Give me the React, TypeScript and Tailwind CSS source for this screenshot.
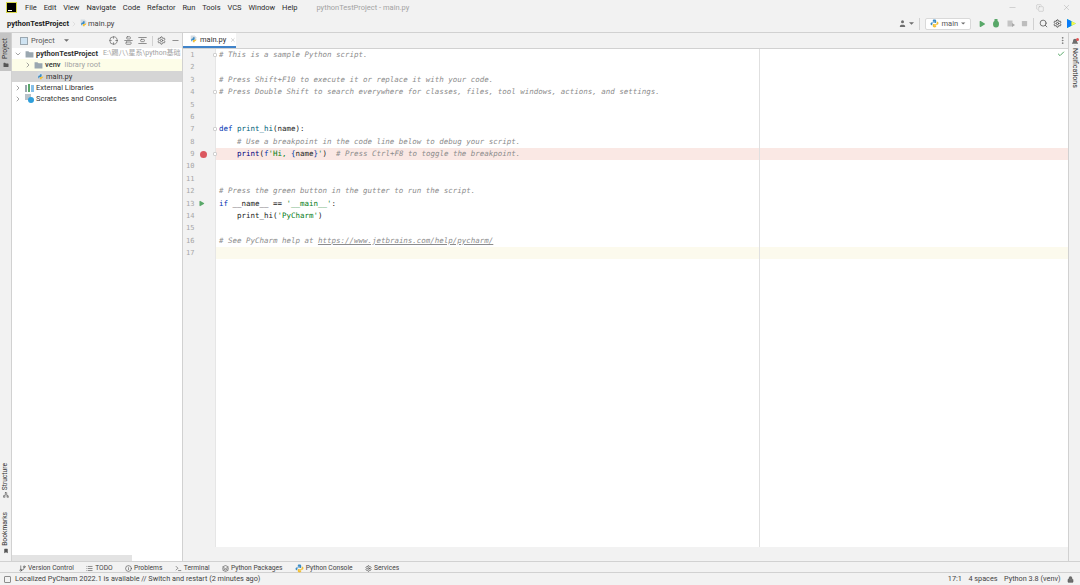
import React from "react";
import {
  ChevronDown,
  ChevronRight,
  Minus,
  Search,
  Settings,
  Square,
  X,
  Play,
  Check,
  MoreVertical,
  Copy,
  Crosshair,
  AlignVerticalJustifyCenter,
  AlignVerticalSpaceAround,
  User,
  Lock,
  GitBranch,
  List,
  Info,
  Terminal,
  Layers,
  Bell,
  Folder as FolderGlyph,
  Bookmark,
  Network,
} from "lucide-react";

const ui = "font-['Roboto','Noto_Sans_CJK_SC',sans-serif]";
const mono = "font-['DejaVu_Sans_Mono',monospace]";

const PyIcon: React.FC<{ size?: number }> = ({ size = 9 }) => (
  <svg width={size} height={size} viewBox="0 0 16 16" className="shrink-0">
    <path d="M3 1h7l3 3v5H3z" fill="#d4dbe2" />
    <path d="M4 8c0-2 1-2 3-2V4h3v3c0 1-1 2-2 2H6v2H4z" fill="#3c8cc4" />
    <path d="M13 8c0 2-1 3-3 3v2H7v-3c0-1 1-1 2-1h2V8z" fill="#f2c037" />
  </svg>
);

const Folder: React.FC = () => (
  <svg width="9" height="8" viewBox="0 0 16 14" className="shrink-0">
    <path d="M1 2h5l2 2h7v9H1z" fill="#9aa7b0" />
  </svg>
);

const PythonLogo: React.FC = () => (
  <svg width="9" height="9" viewBox="0 0 16 16" className="shrink-0">
    <path d="M8 1C5 1 5 2 5 3v2h3.500v1H3C1.500 6 1 7 1 8.500S1.500 11 3 11h1V9c0-1 1-2 2-2h4c1 0 1-1 1-2V3c0-1-1-2-3-2z" fill="#3c8cc4" />
    <path d="M8 15c3 0 3-1 3-2v-2H7.500v-1H13c1.500 0 2-1 2-2.500S14.500 5 13 5h-1v2c0 1-1 2-2 2H6c-1 0-1 1-1 2v2c0 1 1 2 3 2z" fill="#f2c037" />
  </svg>
);

const MenuBar: React.FC = () => {
  const items = ["File", "Edit", "View", "Navigate", "Code", "Refactor", "Run", "Tools", "VCS", "Window", "Help"];
  return (
    <div className={`flex h-[15px] shrink-0 items-center bg-[#f2f2f2] text-[7.5px] text-[#2b2b2b] ${ui}`}>
      <div className="ml-[7px] mr-[9px] flex h-[9px] w-[9px] flex-col justify-end bg-black p-[1px] outline outline-1 outline-[#d8d84a]">
        <span className="h-[1px] w-[4px] bg-white" />
      </div>
      <div className="flex gap-[6.900px]">
        {items.map((item) => (
          <span key={item}>{item}</span>
        ))}
      </div>
      <span className="ml-[19px] text-[#a3a3a3]">pythonTestProject - main.py</span>
      <div className="ml-auto mr-[9px] flex items-center gap-[18.500px] text-[#9a9a9a]">
        <Minus size={9} strokeWidth={1} />
        <Copy size={8} strokeWidth={1} />
        <X size={9} strokeWidth={1} />
      </div>
    </div>
  );
};

const NavBar: React.FC = () => (
  <div className={`flex h-[18px] shrink-0 items-center border-b border-[#d1d1d1] bg-[#f2f2f2] pl-[7px] pr-[4px] text-[7.5px] ${ui}`}>
    <span className="font-bold text-[#222]">pythonTestProject</span>
    <ChevronRight size={8} strokeWidth={1} className="mx-[1px] text-[#b8b8b8]" />
    <PyIcon />
    <span className="text-[#444]">main.py</span>
    <div className="ml-auto flex items-center">
      <User size={9} fill="#6e6e6e" strokeWidth={0} />
      <svg width="5" height="3" viewBox="0 0 6 3" className="ml-[2px]">
        <path d="M0 0h6L3 3z" fill="#6e6e6e" />
      </svg>
      <div className="ml-[5px] mr-[5px] h-[12px] w-px bg-[#d1d1d1]" />
      <div className="flex h-[12px] w-[46px] items-center gap-[3px] rounded-[2px] border border-[#d9d9d9] bg-white px-[4px] text-[#555]">
        <PythonLogo />
        <span>main</span>
        <svg width="5" height="3" viewBox="0 0 6 3" className="ml-auto">
          <path d="M0 0h6L3 3z" fill="#6e6e6e" />
        </svg>
      </div>
      <div className="ml-[7px] flex items-center gap-[6.500px]">
        <Play size={8} fill="#59a869" strokeWidth={0} />
        <svg width="8" height="9" viewBox="0 0 8 9">
          <ellipse cx="4" cy="5" rx="3" ry="3.500" fill="#59a869" />
          <rect x="2.500" y="0" width="3" height="2" fill="#59a869" />
        </svg>
        <svg width="8" height="8" viewBox="0 0 8 8">
          <rect x="0.500" y="0.500" width="5" height="6" fill="#c4c4c4" />
          <path d="M5 3l3 2-3 2z" fill="#a8a8a8" />
        </svg>
        <Square size={7} fill="#bdbdbd" strokeWidth={0} />
      </div>
      <div className="mx-[5px] h-[12px] w-px bg-[#d1d1d1]" />
      <div className="flex items-center gap-[5px] text-[#4e4e4e]">
        <Search size={9} strokeWidth={2} />
        <Settings size={9} strokeWidth={2.5} />
        <svg width="9" height="9" viewBox="0 0 10 10">
          <path d="M0 0l10 5-10 5z" fill="#21d789" />
          <path d="M0 0l5 2.500v5L0 10z" fill="#087cfa" />
          <path d="M5 2.500L10 5 5 7.500z" fill="#fcf84a" />
        </svg>
      </div>
    </div>
  </div>
);

const ToolWindowHeader: React.FC = () => (
  <div className={`flex h-[15px] shrink-0 items-center bg-[#f2f2f2] pl-[8px] pr-[2px] text-[7.5px] text-[#555] ${ui}`}>
    <span className="h-[8px] w-[8px] border border-[#9aa7b0] bg-[#cfe3f2]" />
    <span className="ml-[3px]">Project</span>
    <svg width="5" height="3" viewBox="0 0 6 3" className="ml-[9px]">
      <path d="M0 0h6L3 3z" fill="#6e6e6e" />
    </svg>
    <div className="ml-auto flex items-center gap-[5.500px] text-[#6e6e6e]">
      <Crosshair size={9} />
      <AlignVerticalJustifyCenter size={9} />
      <AlignVerticalSpaceAround size={9} />
      <div className="ml-[-0.500px] mr-[-2px] h-[10px] w-px bg-[#d1d1d1]" />
      <Settings size={9} strokeWidth={2.5} />
      <Minus size={9} />
    </div>
  </div>
);

const TreeRow: React.FC<{ depth: number; className?: string; children: React.ReactNode }> = ({
  depth,
  className = "",
  children,
}) => (
  <div
    className={`flex h-[11.3px] items-center gap-[2px] overflow-hidden whitespace-nowrap text-[7.5px] text-[#333] ${className}`}
    style={{ paddingLeft: depth }}
  >
    {children}
  </div>
);

const ProjectPane: React.FC = () => (
  <div className={`flex w-[171px] shrink-0 flex-col border-r border-[#d1d1d1] bg-white ${ui}`}>
    <ToolWindowHeader />
    <div className="flex-1 overflow-hidden">
      <TreeRow depth={2}>
        <ChevronDown size={8} className="mr-[1px] shrink-0 text-[#777]" />
        <Folder />
        <span className="font-bold">pythonTestProject</span>
        <span className="ml-[3px] text-[7px] text-[#a3a3a3]">E:\踢八\星系\python基础</span>
      </TreeRow>
      <TreeRow depth={12} className="bg-[#fdfde8]">
        <ChevronRight size={8} className="shrink-0 text-[#777]" />
        <Folder />
        <span className="font-medium">venv</span>
        <span className="ml-[2px] text-[#a3a3a3]">library root</span>
      </TreeRow>
      <TreeRow depth={24} className="bg-[#d5d5d5]">
        <PyIcon />
        <span className="-ml-[1px]">main.py</span>
      </TreeRow>
      <TreeRow depth={2}>
        <ChevronRight size={8} className="mr-[1px] shrink-0 text-[#777]" />
        <svg width="9" height="8" viewBox="0 0 9 8" className="shrink-0">
          <rect x="0" y="1" width="2" height="7" fill="#9aa7b0" />
          <rect x="3" y="0" width="2" height="8" fill="#59a869" />
          <rect x="6" y="1" width="3" height="7" fill="#87c0e8" />
        </svg>
        <span>External Libraries</span>
      </TreeRow>
      <TreeRow depth={2}>
        <ChevronRight size={8} className="mr-[1px] shrink-0 text-[#777]" />
        <svg width="9" height="9" viewBox="0 0 9 9" className="shrink-0">
          <rect x="0" y="0" width="6" height="6" fill="#b9c2c9" />
          <circle cx="6" cy="6" r="3" fill="#2f9fdb" />
        </svg>
        <span>Scratches and Consoles</span>
      </TreeRow>
    </div>
    <div className="h-[6px] w-[120px] shrink-0 bg-[#e3e3e3]" />
  </div>
);

const C: React.FC<{ children: React.ReactNode }> = ({ children }) => (
  <span className="italic text-[#8c8c8c]">{children}</span>
);
const Str: React.FC<{ children: React.ReactNode }> = ({ children }) => (
  <span className="text-[#067d17]">{children}</span>
);
const Kw: React.FC<{ children: React.ReactNode }> = ({ children }) => (
  <span className="text-[#0033b3]">{children}</span>
);

type Line = { body?: React.ReactNode; mark?: "break" | "run"; fold?: boolean; row?: string };

const lines: Line[] = [
  { fold: true, body: <C># This is a sample Python script.</C> },
  {},
  { body: <C># Press Shift+F10 to execute it or replace it with your code.</C> },
  { fold: true, body: <C># Press Double Shift to search everywhere for classes, files, tool windows, actions, and settings.</C> },
  {},
  {},
  { fold: true, body: <><Kw>def</Kw> <span className="text-[#00627a]">print_hi</span>(<span>name</span>):</> },
  { body: <C>    # Use a breakpoint in the code line below to debug your script.</C> },
  {
    mark: "break",
    fold: true,
    row: "bg-[#fae8e4]",
    body: <>    <span className="text-[#000080]">print</span>(<Kw>f</Kw><Str>'Hi, </Str><span className="text-[#0037a6]">{"{"}</span>name<span className="text-[#0037a6]">{"}"}</span><Str>'</Str>)  <C># Press Ctrl+F8 to toggle the breakpoint.</C></>,
  },
  {},
  {},
  { body: <C># Press the green button in the gutter to run the script.</C> },
  { mark: "run", body: <><Kw>if</Kw> __name__ == <Str>'__main__'</Str>:</> },
  { body: <>    print_hi(<Str>'PyCharm'</Str>)</> },
  {},
  { body: <C># See PyCharm help at <span className="underline">https://www.jetbrains.com/help/pycharm/</span></C> },
  { row: "bg-[#fcfaed]" },
];

const Editor: React.FC = () => (
  <div className="flex min-w-0 flex-1 flex-col bg-white">
    <div className={`flex h-[15px] shrink-0 items-stretch bg-[#f2f2f2] text-[7.5px] text-[#333] ${ui}`}>
      <div className="flex w-[53px] items-center gap-[2px] border-b-2 border-[#4083c9] bg-white pl-[6px]">
        <PyIcon />
        <span>main.py</span>
        <X size={6} className="ml-[2px] text-[#a3a3a3]" />
      </div>
      <div className="ml-auto flex items-center pr-[1px] text-[#6e6e6e]">
        <MoreVertical size={9} />
      </div>
    </div>
    <div className="relative flex-1 overflow-hidden border-t border-[#d1d1d1]">
      <div className="absolute bottom-0 left-[576px] top-0 w-px bg-[#e0e0e0]" />
      <Check size={8} strokeWidth={3} className="absolute right-[3px] top-[1px] text-[#59a869]" />
      <div className="flex h-full">
        <div className={`w-[33px] shrink-0 border-r border-[#e6e6e6] bg-[#f2f2f2] text-[7px] text-[#a6a6a6] ${mono}`}>
          {lines.map((line, i) => (
            <div key={i} className="relative h-[12.375px] leading-[12.375px]">
              <span className="inline-block w-[11.500px] text-right">{i + 1}</span>
              {line.mark === "break" && (
                <span className="absolute left-[16.500px] top-[2.500px] h-[7px] w-[7px] rounded-full bg-[#db5860]" />
              )}
              {line.mark === "run" && (
                <Play size={7} fill="#59a869" strokeWidth={0} className="absolute left-[15px] top-[2.500px]" />
              )}
              {line.fold && (
                <span className="absolute right-[-2px] top-[4px] h-[4px] w-[4px] rounded-[1px] border border-[#d0d0d0] bg-white" />
              )}
            </div>
          ))}
        </div>
        <div className={`min-w-0 flex-1 text-[7.47px] text-[#222] ${mono}`}>
          {lines.map((line, i) => (
            <div
              key={i}
              className={`h-[12.375px] whitespace-pre pl-[3px] leading-[12.375px] ${line.row ?? ""}`}
            >
              {line.body}
            </div>
          ))}
        </div>
      </div>
    </div>
    <div className="h-[14px] shrink-0 bg-[#f2f2f2]" />
  </div>
);

const LeftStripe: React.FC = () => (
  <div className={`flex w-[12px] shrink-0 flex-col border-r border-[#d1d1d1] bg-[#f2f2f2] text-[6.7px] text-[#333] ${ui}`}>
    <div className="flex h-[38px] flex-col items-center gap-[3px] bg-[#c4c4c4] pt-[5px]">
      <span className="rotate-180 whitespace-nowrap [writing-mode:vertical-rl]">Project</span>
      <FolderGlyph size={6} fill="#555" strokeWidth={0} />
    </div>
    <div className="mt-auto flex flex-col items-center pb-[7px]">
      <span className="rotate-180 whitespace-nowrap [writing-mode:vertical-rl]">Structure</span>
      <Network size={6} className="mt-[2px] text-[#555]" />
      <span className="mt-[14px] rotate-180 whitespace-nowrap [writing-mode:vertical-rl]">Bookmarks</span>
      <Bookmark size={6} fill="#555" strokeWidth={0} className="mt-[2px]" />
    </div>
  </div>
);

const RightStripe: React.FC = () => (
  <div className={`flex w-[12px] shrink-0 flex-col items-center border-l border-[#d1d1d1] bg-[#f2f2f2] pt-[5px] text-[7px] text-[#333] ${ui}`}>
    <div className="relative">
      <Bell size={8} fill="#6e6e6e" strokeWidth={0} />
      <span className="absolute right-0 top-0 h-[3px] w-[3px] rounded-full bg-[#e05555]" />
    </div>
    <span className="mt-[2px] whitespace-nowrap [writing-mode:vertical-rl]">Notifications</span>
  </div>
);

const BottomTabs: React.FC = () => {
  const tabs = [
    { label: "Version Control", icon: <GitBranch size={7} /> },
    { label: "TODO", icon: <List size={7} /> },
    { label: "Problems", icon: <Info size={7} /> },
    { label: "Terminal", icon: <Terminal size={7} /> },
    { label: "Python Packages", icon: <Layers size={7} /> },
    { label: "Python Console", icon: <PythonLogo /> },
    { label: "Services", icon: <Settings size={7} /> },
  ];
  return (
    <div className={`flex h-[12px] shrink-0 items-center gap-[12.300px] border-y border-[#d1d1d1] bg-[#f2f2f2] pl-[19px] pt-[2px] text-[6.7px] text-[#444] ${ui}`}>
      {tabs.map((tab) => (
        <span key={tab.label} className="flex items-center gap-[2px]">
          {tab.icon}
          {tab.label}
        </span>
      ))}
    </div>
  );
};

const StatusBar: React.FC = () => (
  <div className={`flex h-[12px] shrink-0 items-center bg-[#f2f2f2] pl-[4px] pr-[6px] pt-[1px] text-[7.3px] text-[#444] ${ui}`}>
    <span className="h-[7px] w-[7px] rounded-[1px] border border-[#8c8c8c]" />
    <span className="ml-[4px]">Localized PyCharm 2022.1 is available // Switch and restart (2 minutes ago)</span>
    <div className="ml-auto flex items-center gap-[6.500px]">
      <span>17:1</span>
      <span>4 spaces</span>
      <span>Python 3.8 (venv)</span>
      <Lock size={7} fill="#6e6e6e" strokeWidth={1} />
    </div>
  </div>
);

export default function App() {
  return (
    <div className="flex h-[585px] w-[1080px] flex-col overflow-hidden bg-[#f2f2f2]">
      <MenuBar />
      <NavBar />
      <div className="flex min-h-0 flex-1">
        <LeftStripe />
        <ProjectPane />
        <Editor />
        <RightStripe />
      </div>
      <BottomTabs />
      <StatusBar />
    </div>
  );
}
